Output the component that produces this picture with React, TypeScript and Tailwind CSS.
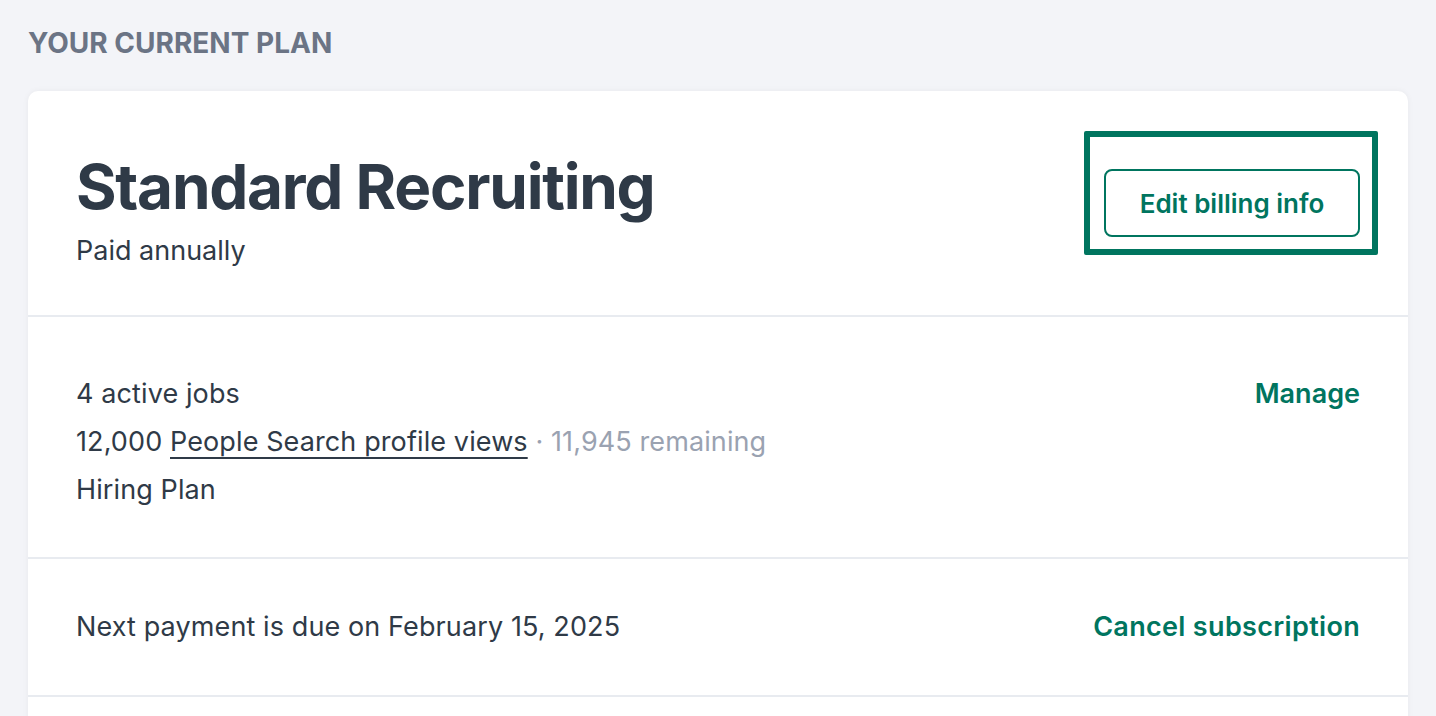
export default function App() {
  return (
    <div
      className="min-h-screen bg-[#f3f4f8] px-[28px] pt-[26px] text-[#2f3a47]"
      style={{ fontFamily: "Inter, 'Noto Sans', sans-serif" }}
    >
      <h2 className="text-[28px] font-bold leading-[34px] text-[#6b7485]">YOUR CURRENT PLAN</h2>

      <div className="mt-[31px] rounded-[10px] bg-white shadow-[0_0_6px_rgba(0,0,0,0.05)]">
        {/* plan header */}
        <div className="flex items-center justify-between border-b-2 border-[#e8ebf0] px-[48px] pt-[56px] pb-[40px]">
          <div>
            <h1 className="text-[62px] font-bold leading-[80px] tracking-[-0.02em]">Standard Recruiting</h1>
            <p className="text-[27px] leading-[48px]">Paid annually</p>
          </div>
          <div className="relative mb-[16px]">
            <button className="h-[68px] w-[256px] rounded-[8px] border-2 border-[#00755f] text-[26px] font-semibold text-[#00755f]">
              Edit billing info
            </button>
            {/* focus highlight */}
            <div className="pointer-events-none absolute -top-[38px] -bottom-[18px] -left-[20px] -right-[18px] rounded-[2px] border-[6px] border-[#00755f]" />
          </div>
        </div>

        {/* usage */}
        <div className="flex items-start justify-between border-b-2 border-[#e8ebf0] px-[48px] pt-[53px] pb-[43px]">
          <div className="text-[27px] leading-[48px] tracking-[0.004em]">
            <p>4 active jobs</p>
            <p>
              12,000 <span className="underline decoration-[2px] underline-offset-[6px]">People Search profile views</span>{" "}
              <span className="text-[#9aa2b1]">· 11,945 remaining</span>
            </p>
            <p>Hiring Plan</p>
          </div>
          <a className="text-[27px] font-semibold leading-[48px] text-[#00755f]">Manage</a>
        </div>

        {/* payment */}
        <div className="flex items-center justify-between border-b-2 border-[#e8ebf0] px-[48px] py-[44px]">
          <p className="text-[27px] leading-[48px] tracking-[0.004em]">Next payment is due on February 15, 2025</p>
          <a className="text-[27px] font-semibold leading-[48px] tracking-[0.012em] text-[#00755f]">Cancel subscription</a>
        </div>

        <div className="h-[80px]" />
      </div>
    </div>
  );
}
